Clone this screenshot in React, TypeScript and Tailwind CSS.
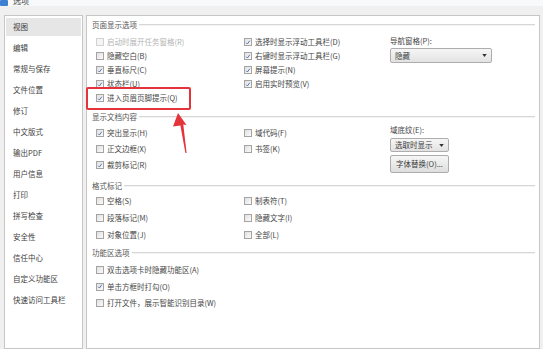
import React from 'react';

// WPS "选项" dialog, 视图 page (annotated screenshot)

const navItems = [
  '视图', '编辑', '常规与保存', '文件位置', '修订', '中文版式', '输出PDF',
  '用户信息', '打印', '拼写检查', '安全性', '信任中心', '自定义功能区', '快速访问工具栏',
];

const Box = ({ checked, disabled }: { checked?: boolean; disabled?: boolean }) => (
  <span
    className={`flex h-[8px] w-[8px] shrink-0 items-center justify-center border ${
      disabled ? 'border-[#d2d2d2] bg-[#f5f5f5]' : 'border-[#a4a4a4] bg-linear-to-br from-[#e0e0e0] to-[#fbfbfb]'
    }`}
  >
    {checked && (
      <svg viewBox="0 0 8 8" className="h-[7px] w-[7px]">
        <path d="M1.6 4.3 L3.2 6 L6.4 1.6" stroke="#4a66a6" strokeWidth="1.2" fill="none" />
      </svg>
    )}
  </span>
);

const Check = ({ label, checked, disabled, h = 'h-[14px]' }: { label: string; checked?: boolean; disabled?: boolean; h?: string }) => (
  <div className={`flex items-center gap-[3px] whitespace-nowrap ${h}`}>
    <Box checked={checked} disabled={disabled} />
    <span className={disabled ? 'text-[#b4b4b4]' : 'text-[#454545]'}>{label}</span>
  </div>
);

const GroupTitle = ({ title, mt }: { title: string; mt: string }) => (
  <div className={`flex h-[12px] items-center gap-[2px] pl-[5px] pr-[4px] ${mt}`}>
    <span className="whitespace-nowrap text-[#555]">{title}</span>
    <div className="h-[2px] flex-1 border-t border-b border-t-[#d6d6d6] border-b-[#f4f4f4]" />
  </div>
);

const Select = ({ value, w, h }: { value: string; w: string; h: string }) => (
  <div className={`flex items-center justify-between rounded-[2px] border border-[#adadad] bg-linear-to-b from-[#f6f6f6] to-[#e2e2e2] pl-[4px] pr-[4px] ${w} ${h}`}>
    <span className="text-[#3a3a3a]">{value}</span>
    <svg viewBox="0 0 6 4" className="h-[3px] w-[5px]">
      <path d="M0 0 L6 0 L3 4 Z" fill="#333" />
    </svg>
  </div>
);

export default function App() {
  return (
    <div className="relative h-[349px] w-[543px] overflow-hidden bg-[#f0f0f0] font-['Noto_Sans_CJK_SC','Noto_Sans',sans-serif] text-[7.5px] leading-[8px]">
      {/* title bar */}
      <div className="flex h-[6px] items-start gap-[5px] overflow-hidden bg-[#f7f9fb]">
        <span className="h-[6px] w-[8px] rounded-[1px] bg-[#3d7fd1]" />
        <span className="-mt-[3px] text-[8px] text-[#444]">选项</span>
      </div>

      <div className="flex h-[343px] gap-[3px] pt-[9px] pl-[4px] pr-[3px]">
        {/* sidebar */}
        <div className="flex w-[79px] flex-col border border-[#c6c6c6] bg-white">
          {navItems.map((item, i) => (
            <div key={item} className="flex h-[21px] items-center px-[1px]">
              <div className={`flex h-[18px] w-full items-center pl-[7px] text-[#404040] ${i === 0 ? 'bg-[#e6e6e6]' : ''}`}>
                {item}
              </div>
            </div>
          ))}
        </div>

        {/* main panel */}
        <div className="flex flex-1 flex-col border border-[#c6c6c6] bg-white">
          <GroupTitle title="页面显示选项" mt="mt-[3px]" />
          <div className="mt-[4px] flex pl-[9px]">
            <div className="flex w-[148px] flex-col">
              <Check label="启动时展开任务窗格(R)" disabled />
              <Check label="隐藏空白(B)" />
              <Check label="垂直标尺(C)" checked />
              <Check label="状态栏(U)" checked />
              <Check label="进入页眉页脚提示(Q)" checked />
            </div>
            <div className="flex w-[146px] flex-col">
              <Check label="选择时显示浮动工具栏(D)" checked />
              <Check label="右键时显示浮动工具栏(G)" checked />
              <Check label="屏幕提示(N)" checked />
              <Check label="启用实时预览(V)" checked />
            </div>
            <div className="flex flex-col">
              <span className="mt-[2px] text-[#454545]">导航窗格(P):</span>
              <div className="mt-[3px]">
                <Select value="隐藏" w="w-[102px]" h="h-[15px]" />
              </div>
            </div>
          </div>

          <GroupTitle title="显示文档内容" mt="mt-[6px]" />
          <div className="mt-[2px] flex pl-[9px]">
            <div className="flex w-[148px] flex-col">
              <Check label="突出显示(H)" checked h="h-[16px]" />
              <Check label="正文边框(X)" h="h-[16px]" />
              <Check label="裁剪标记(R)" checked h="h-[16px]" />
            </div>
            <div className="flex w-[146px] flex-col">
              <Check label="域代码(F)" h="h-[16px]" />
              <Check label="书签(K)" h="h-[16px]" />
            </div>
            <div className="flex flex-col">
              <span className="mt-[1px] text-[#454545]">域底纹(E):</span>
              <div className="mt-[4px]">
                <Select value="选取时显示" w="w-[59px]" h="h-[14px]" />
              </div>
              <div className="mt-[3px] flex h-[18px] w-[59px] items-center justify-center rounded-[2px] border border-[#adadad] bg-linear-to-b from-[#f6f6f6] to-[#dedede] text-[#3a3a3a]">
                字体替换(O)...
              </div>
            </div>
          </div>

          <GroupTitle title="格式标记" mt="mt-[7px]" />
          <div className="flex pl-[9px]">
            <div className="flex w-[148px] flex-col">
              <Check label="空格(S)" h="h-[17px]" />
              <Check label="段落标记(M)" h="h-[17px]" />
              <Check label="对象位置(J)" h="h-[17px]" />
            </div>
            <div className="flex w-[146px] flex-col">
              <Check label="制表符(T)" h="h-[17px]" />
              <Check label="隐藏文字(I)" h="h-[17px]" />
              <Check label="全部(L)" h="h-[17px]" />
            </div>
          </div>

          <GroupTitle title="功能区选项" mt="mt-[4px]" />
          <div className="mt-[3px] flex flex-col pl-[9px]">
            <Check label="双击选项卡时隐藏功能区(A)" h="h-[16.5px]" />
            <Check label="单击方框时打勾(O)" checked h="h-[16.5px]" />
            <Check label="打开文件，展示智能识别目录(W)" h="h-[16.5px]" />
          </div>
        </div>
      </div>

      {/* annotation: red box + arrow */}
      <div className="pointer-events-none absolute left-[86px] top-[87px] h-[23px] w-[105px] rounded-[2px] border-2 border-[#e5333b]" />
      <svg className="pointer-events-none absolute left-0 top-0" width="543" height="349">
        <path d="M178 113 L186.5 125 L183.3 124.6 L186.6 153 L185.4 153 L180.4 125.4 L173 126.6 Z" fill="#e5333b" />
      </svg>
    </div>
  );
}
